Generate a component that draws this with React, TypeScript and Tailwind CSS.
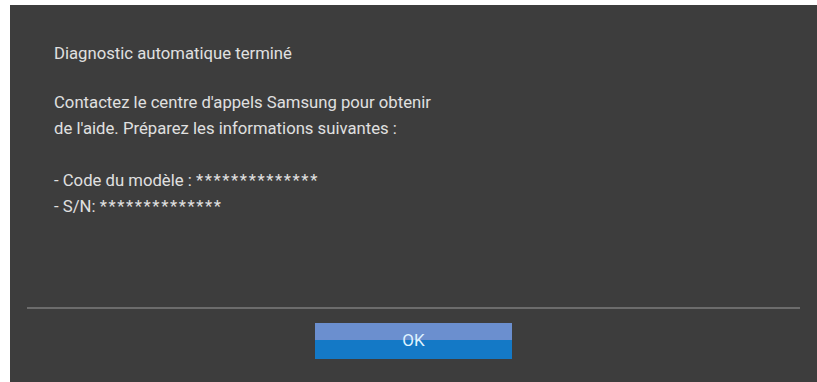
export default function App() {
  return (
    <div className="w-full h-[382px] bg-white pl-[10px] pt-[5px]">
      <div className="h-full bg-[#3d3d3d] flex flex-col font-['Roboto',sans-serif] text-[#e0e0e0]">
        <div className="pl-[44px] pt-[36px] text-[16.7px] leading-[26px] h-[302px]">
          <p>Diagnostic automatique terminé</p>
          <p className="mt-[23px]">Contactez le centre d'appels Samsung pour obtenir</p>
          <p>de l'aide. Préparez les informations suivantes :</p>
          <p className="mt-[26px]">
            - Code du modèle : <span className="tracking-[1.6px]">**************</span>
          </p>
          <p>
            - S/N: <span className="tracking-[1.6px]">**************</span>
          </p>
        </div>
        <div className="ml-[17px] mr-[17px] h-[2px] bg-[#6c6c6c]"></div>
        <div className="flex justify-center pt-[14px]">
          <button className="relative w-[197px] h-[36px] flex flex-col">
            <span className="h-[17px] w-full bg-[#6b8fcf]"></span>
            <span className="flex-1 w-full bg-[#1479c6]"></span>
            <span className="absolute inset-0 flex items-center justify-center text-[17px] text-[#dff2ff]">OK</span>
          </button>
        </div>
      </div>
    </div>
  );
}
